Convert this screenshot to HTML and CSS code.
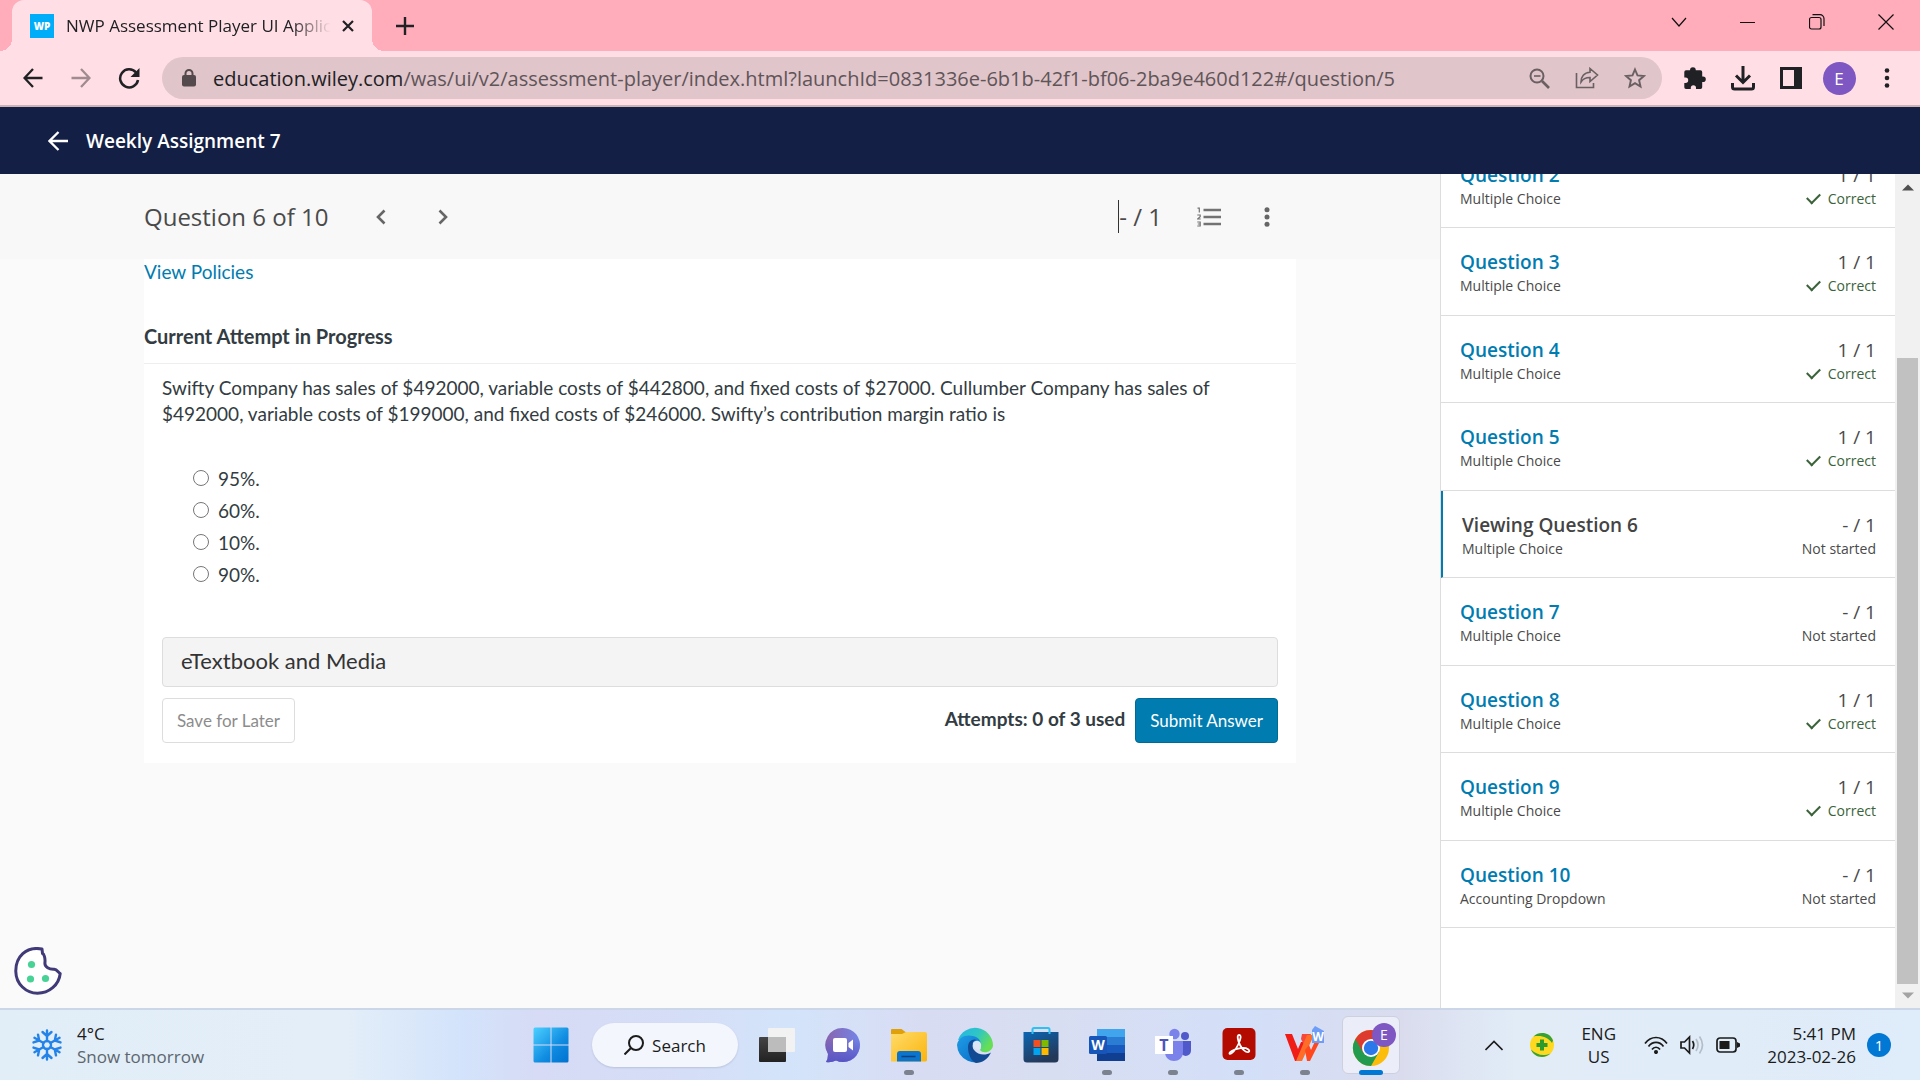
FILE: index.html
```html
<!DOCTYPE html>
<html lang="en">
<head>
  <meta charset="utf-8">
  <title>NWP Assessment Player UI Application</title>
  <link rel="stylesheet" href="styles.css">
</head>
<body>
  <!-- browser chrome -->
  <div class="tabstrip">
    <div class="tab">
      <span class="favicon">WP</span>
      <span class="tab-title">NWP Assessment Player UI Application</span>
      <button class="icon-btn tab-close" aria-label="Close tab"><svg width="14" height="14" viewBox="0 0 14 14"><path d="M2 2l10 10M12 2L2 12" stroke="#202124" stroke-width="2.2"/></svg></button>
    </div>
    <button class="icon-btn new-tab" aria-label="New tab"><svg width="18" height="18" viewBox="0 0 18 18"><path d="M9 0v18M0 9h18" stroke="#202124" stroke-width="2.4"/></svg></button>
    <div class="window-buttons">
      <button class="icon-btn" aria-label="Search tabs"><svg width="16" height="16" viewBox="0 0 16 16"><path d="M1 4l7 8 7-8" fill="none" stroke="#111" stroke-width="1.2"/></svg></button>
      <button class="icon-btn" aria-label="Minimize"><svg width="16" height="16" viewBox="0 0 16 16"><path d="M0 8.5h15" stroke="#111"/></svg></button>
      <button class="icon-btn" aria-label="Restore"><svg width="16" height="16" viewBox="0 0 16 16"><rect x="0.5" y="3.5" width="11.5" height="11.5" rx="2" fill="none" stroke="#111" stroke-width="1.2"/><path d="M3.5 .7H11a4 4 0 0 1 4 4V12" fill="none" stroke="#111" stroke-width="1.2"/></svg></button>
      <button class="icon-btn" aria-label="Close"><svg width="16" height="16" viewBox="0 0 16 16"><path d="M.5.5l15 15M15.500.5l-15 15" stroke="#111" stroke-width="1.2"/></svg></button>
    </div>
  </div>

  <div class="toolbar">
    <button class="icon-btn nav-btn" aria-label="Back"><svg width="20" height="20" viewBox="0 0 20 20"><path d="M19.5 10H2M10 1L1.500 10l8.500 9" fill="none" stroke="#202124" stroke-width="2.3"/></svg></button>
    <button class="icon-btn nav-btn" aria-label="Forward"><svg width="20" height="20" viewBox="0 0 20 20"><path d="M.5 10H18M10 1l8.500 9-8.500 9" fill="none" stroke="#a08b90" stroke-width="2.3"/></svg></button>
    <button class="icon-btn nav-btn" aria-label="Reload"><svg width="22" height="22" viewBox="0 0 22 22"><path d="M18 5.500A9 9 0 1 0 20 13" fill="none" stroke="#202124" stroke-width="2.5"/><path d="M21.500 1v9h-9z" fill="#202124"/></svg></button>
    <div class="omnibox">
      <svg width="14" height="18" viewBox="0 0 14 18"><rect y="6" width="14" height="11.5" rx="2" fill="#54494c"/><path d="M3.500 7V4.500a3.500 3.500 0 0 1 7 0V7" fill="none" stroke="#54494c" stroke-width="2"/></svg>
      <span class="url"><b>education.wiley.com</b>/was/ui/v2/assessment-player/index.html?launchId=0831336e-6b1b-42f1-bf06-2ba9e460d122#/question/5</span>
      <button class="icon-btn tool-btn" aria-label="Zoom"><svg width="21" height="21" viewBox="0 0 21 21" fill="none" stroke="#6a5f62" stroke-width="2"><circle cx="8" cy="8" r="6.5"/><path d="M13 13l7 7" stroke-width="2.6"/><path d="M5 8h6.500" stroke-width="1.6"/></svg></button>
      <button class="icon-btn tool-btn" aria-label="Share"><svg width="24" height="22" viewBox="0 0 24 22" fill="none" stroke="#6a5f62" stroke-width="1.6"><path d="M1.500 6v14.500h17V16"/><path d="M15 1.500L22.500 8 15 14.500v-4c-4 0-7 1.200-9 4.500 0-5 3-9.500 9-9.800z"/></svg></button>
      <button class="icon-btn tool-btn" aria-label="Bookmark"><svg width="22" height="22" viewBox="0 0 22 22"><path d="M11 2.500l2.500 5.900 6.400.6-4.800 4.200 1.400 6.300-5.500-3.300-5.500 3.300 1.400-6.300L2.100 9l6.400-.6z" fill="none" stroke="#6a5f62" stroke-width="1.9"/></svg></button>
    </div>
    <div class="toolbar-actions">
      <button class="icon-btn tool-btn" aria-label="Extensions"><svg width="22" height="22" viewBox="0 0 22 22"><path d="M6 3.200a2.900 2.900 0 0 1 5.800 0h4.700a1.700 1.700 0 0 1 1.700 1.700v4.600h.8a2.800 2.800 0 0 1 0 5.600h-.8v5.200a1.700 1.700 0 0 1-1.700 1.700H12v-1.200a2.600 2.600 0 0 0-5.200 0V22H2a1.700 1.700 0 0 1-1.700-1.700V16h1.200a2.700 2.700 0 0 0 0-5.400H.3V4.900A1.700 1.700 0 0 1 2 3.200z" fill="#202124"/></svg></button>
      <button class="icon-btn tool-btn" aria-label="Downloads"><svg width="24" height="25" viewBox="0 0 24 25" fill="none" stroke="#202124" stroke-width="3"><path d="M12 0v16M5 9.500l7 7 7-7"/><path d="M1.500 17v4q0 2 2 2h17q2 0 2-2v-4"/></svg></button>
      <button class="icon-btn tool-btn" aria-label="Side panel"><svg width="22" height="22" viewBox="0 0 22 22"><path d="M0 0h22v22H0zM3 3v16h11V3z" fill="#202124" fill-rule="evenodd"/></svg></button>
      <button class="icon-btn tool-btn" aria-label="Profile"><span class="avatar">E</span></button>
      <button class="icon-btn tool-btn" aria-label="Menu"><svg width="6" height="20" viewBox="0 0 6 20" fill="#202124"><circle cx="3" cy="2.5" r="2.3"/><circle cx="3" cy="10" r="2.3"/><circle cx="3" cy="17.5" r="2.3"/></svg></button>
    </div>
  </div>

  <header class="app-header">
    <button class="icon-btn" aria-label="Back to course"><svg width="20" height="20" viewBox="0 0 20 20"><path d="M20 10H2M10.500 1L1.500 10l9 9" fill="none" stroke="#fff" stroke-width="2.3"/></svg></button>
    <h1>Weekly Assignment 7</h1>
  </header>

  <div class="content">
    <main class="player">
      <div class="question-bar">
        <h2>Question 6 of 10</h2>
        <button class="icon-btn step" aria-label="Previous question"><svg width="10" height="16" viewBox="0 0 10 16"><path d="M8.500 1.500L2 8l6.500 6.500" fill="none" stroke="#666" stroke-width="2.6"/></svg></button>
        <button class="icon-btn step" aria-label="Next question"><svg width="10" height="16" viewBox="0 0 10 16"><path d="M1.500 1.500L8 8l-6.500 6.500" fill="none" stroke="#666" stroke-width="2.6"/></svg></button>
        <span class="bar-score">- / 1</span>
        <button class="icon-btn bar-list" aria-label="Question list"><svg width="24" height="20" viewBox="0 0 24 20" fill="none" stroke="#737373"><path d="M6.500 3H24M6.500 10H24M6.500 17H24" stroke-width="2.4"/><path d="M.5 1.200H2.300V5.500M.3 8H3.200V9.700L.6 12H3.700M.3 15H3.200V19H.3M.8 17H3.200" stroke-width="1.2"/></svg></button>
        <button class="icon-btn bar-more" aria-label="More"><svg width="6" height="20" viewBox="0 0 6 20" fill="#666"><circle cx="3" cy="2.8" r="2.5"/><circle cx="3" cy="10" r="2.5"/><circle cx="3" cy="17.2" r="2.5"/></svg></button>
      </div>

      <section class="card">
        <a class="policies" href="#">View Policies</a>
        <h3>Current Attempt in Progress</h3>
        <div class="question">
          <p>Swifty Company has sales of $492000, variable costs of $442800, and fixed costs of $27000. Cullumber Company has sales of $492000, variable costs of $199000, and fixed costs of $246000. Swifty’s contribution margin ratio is</p>
          <div class="answers">
            <label><input type="radio" name="answer" value="95">95%.</label>
            <label><input type="radio" name="answer" value="60">60%.</label>
            <label><input type="radio" name="answer" value="10">10%.</label>
            <label><input type="radio" name="answer" value="90">90%.</label>
          </div>
          <button class="etextbook">eTextbook and Media</button>
          <div class="actions">
            <button class="btn save">Save for Later</button>
            <span class="attempts">Attempts: 0 of 3 used</span>
            <button class="btn submit">Submit Answer</button>
          </div>
        </div>
      </section>

      <button class="icon-btn cookie" aria-label="Cookie settings"><svg width="48" height="48" viewBox="0 0 48 48"><path d="M28 2C12-1 1.500 10 1.800 24.500 2 37 12 46.200 23.500 46.200S45 38 46.200 26.500c-2-1-3-4-6-4.300-5 .3-9.500-2-9.300-6.200C31.500 11 30 7 28.500 6.500z" fill="#fff" stroke="#403a78" stroke-width="3" stroke-linejoin="round"/><g fill="#49d295"><circle cx="17.5" cy="17.5" r="3.6"/><circle cx="16.5" cy="32" r="3.6"/><circle cx="31.5" cy="31.5" r="3.6"/></g></svg></button>
    </main>

    <aside class="sidebar">
      <ul class="question-list">
        <li><div><a href="#">Question 2</a><small>Multiple Choice</small></div><div class="result"><span>1 / 1</span><small class="correct">Correct</small></div></li>
        <li><div><a href="#">Question 3</a><small>Multiple Choice</small></div><div class="result"><span>1 / 1</span><small class="correct">Correct</small></div></li>
        <li><div><a href="#">Question 4</a><small>Multiple Choice</small></div><div class="result"><span>1 / 1</span><small class="correct">Correct</small></div></li>
        <li><div><a href="#">Question 5</a><small>Multiple Choice</small></div><div class="result"><span>1 / 1</span><small class="correct">Correct</small></div></li>
        <li class="current"><div><a href="#">Viewing Question 6</a><small>Multiple Choice</small></div><div class="result"><span>- / 1</span><small>Not started</small></div></li>
        <li><div><a href="#">Question 7</a><small>Multiple Choice</small></div><div class="result"><span>- / 1</span><small>Not started</small></div></li>
        <li><div><a href="#">Question 8</a><small>Multiple Choice</small></div><div class="result"><span>1 / 1</span><small class="correct">Correct</small></div></li>
        <li><div><a href="#">Question 9</a><small>Multiple Choice</small></div><div class="result"><span>1 / 1</span><small class="correct">Correct</small></div></li>
        <li><div><a href="#">Question 10</a><small>Accounting Dropdown</small></div><div class="result"><span>- / 1</span><small>Not started</small></div></li>
      </ul>
      <div class="scrollbar">
        <svg width="12" height="7" viewBox="0 0 12 7"><path d="M0 6.500L6 .5l6 6z" fill="#505050"/></svg>
        <div class="thumb"></div>
        <svg width="12" height="7" viewBox="0 0 12 7"><path d="M0 .5l6 6 6-6z" fill="#a3a3a3"/></svg>
      </div>
    </aside>
  </div>

  <footer class="taskbar">
    <div class="weather">
      <svg width="32" height="32" viewBox="0 0 32 32" fill="none" stroke="#2383e8" stroke-width="2.4" stroke-linecap="round">
        <circle cx="16" cy="16" r="4"/>
        <g id="arm"><path d="M16 12V1.500M16 7l-4.500-4M16 7l4.500-4"/></g>
        <use href="#arm" transform="rotate(60 16 16)"/><use href="#arm" transform="rotate(120 16 16)"/><use href="#arm" transform="rotate(180 16 16)"/><use href="#arm" transform="rotate(240 16 16)"/><use href="#arm" transform="rotate(300 16 16)"/>
      </svg>
      <div><span>4°C</span><span class="muted">Snow tomorrow</span></div>
    </div>

    <div class="apps">
      <button class="app" aria-label="Start"><svg width="36" height="36" viewBox="0 0 36 36"><defs><linearGradient id="win" x1="0" y1="0" x2="1" y2="1"><stop offset="0" stop-color="#4cd0ff"/><stop offset=".6" stop-color="#0f8be0"/><stop offset="1" stop-color="#0072d0"/></linearGradient></defs><path d="M2 .5h15.500v17H.5V2Q.5.500 2 .5zM18.500.5H34q1.500 0 1.500 1.500v15.500h-17zM.5 18.500h17v17H2q-1.500 0-1.500-1.500zM18.500 18.500h17V34q0 1.500-1.500 1.500H18.500z" fill="url(#win)"/></svg></button>
      <button class="search"><svg width="20" height="20" viewBox="0 0 20 20" fill="none" stroke="#1b1b1b" stroke-width="2"><circle cx="12" cy="8" r="7"/><path d="M7 13l-6.500 6.500"/></svg>Search</button>
      <button class="app" aria-label="Task view"><svg width="36" height="36" viewBox="0 0 36 36"><defs><linearGradient id="tv" x1="0" y1="0" x2="0" y2="1"><stop offset="0" stop-color="#444"/><stop offset="1" stop-color="#222"/></linearGradient></defs><rect y="10" width="27" height="25" rx="1" fill="url(#tv)"/><rect x="9" y="1" width="27" height="24" rx="1" fill="#f2f2f2"/><rect x="9" y="10" width="18" height="15" fill="#bcbcbc"/></svg></button>
      <button class="app" aria-label="Chat"><svg width="36" height="36" viewBox="0 0 36 36"><defs><linearGradient id="chat" x1="0" y1="0" x2="1" y2="0"><stop offset="0" stop-color="#8a64ad"/><stop offset="1" stop-color="#7385e8"/></linearGradient><linearGradient id="chat2" x1="0" y1="0" x2="0" y2="1"><stop offset=".3" stop-color="#5558c8" stop-opacity="0"/><stop offset="1" stop-color="#5755c6"/></linearGradient></defs><path d="M18 1a17 17 0 1 1-7 32.500Q6 36 1 35q2-3 2-8A17 17 0 0 1 18 1z" fill="url(#chat)"/><path d="M18 1a17 17 0 1 1-7 32.500Q6 36 1 35q2-3 2-8A17 17 0 0 1 18 1z" fill="url(#chat2)"/><rect x="8" y="11" width="14" height="14" rx="2" fill="#fff"/><path d="M23.500 16l4.500-3.500v11L23.500 20z" fill="#fff"/></svg></button>
      <button class="app open" aria-label="File Explorer"><svg width="36" height="36" viewBox="0 0 36 36"><defs><linearGradient id="fold" x1="0" y1="0" x2="1" y2="1"><stop offset="0" stop-color="#ffdc6b"/><stop offset="1" stop-color="#fbb40c"/></linearGradient></defs><path d="M0 3q0-1 1-1h9.500l4 3H34v4H0z" fill="#dfa009"/><path d="M0 7h11l4-2h19q2 0 2 2v26q0 1.500-2 1.500H0z" fill="url(#fold)"/><path d="M6 34.500V27q0-3 3-3h18q3 0 3 3v7.500z" fill="#0b74cc"/><path d="M10.500 29.500h14" stroke="#073e7c" stroke-width="1.5"/></svg></button>
      <button class="app" aria-label="Edge"><svg width="36" height="36" viewBox="0 0 36 36"><defs><linearGradient id="e1" x1="0" y1="0" x2="1" y2=".5"><stop offset="0" stop-color="#24b5e8"/><stop offset=".55" stop-color="#2fc6c4"/><stop offset="1" stop-color="#67df54"/></linearGradient><linearGradient id="e2" x1="0" y1="0" x2="1" y2="1"><stop offset="0" stop-color="#1f9de6"/><stop offset="1" stop-color="#0867c4"/></linearGradient></defs><path d="M1 13A18 18 0 0 1 36 18c0 7-10 9.500-13 5 2-3 1-8-4-10-6-2.500-14-1-18 0z" fill="url(#e1)"/><path d="M0 18C1 10 9 7 16 9c6 1.500 8 5 7.500 8-2-3-8-3-8 3 0 8 8 14 14 11A18 18 0 0 1 0 18z" fill="url(#e2)"/><path d="M11 20c0-6 5-9 9-7-5 0-6 6-3 10 4 5 11 6 17 2.500C31 32 25 36 19 36c-5-2-8-9-8-16z" fill="#114a92"/><path d="M16 16c2-3 7-3 8 1 .6 2.500-1 4-.5 5-3 2-8-1-7.500-6z" fill="#dce5f5"/></svg></button>
      <button class="app" aria-label="Microsoft Store"><svg width="36" height="36" viewBox="0 0 36 36"><defs><linearGradient id="st" x1="0" y1="0" x2=".5" y2="1"><stop offset="0" stop-color="#0b66b4"/><stop offset="1" stop-color="#243858"/></linearGradient></defs><path d="M.5 5h35v27q0 3.500-3.500 3.500H4Q.5 35.500.5 32z" fill="url(#st)"/><path d="M9.500 7V2.500q0-1.500 1.500-1.500h14q1.500 0 1.500 1.500V7" fill="none" stroke="#2fc0f2" stroke-width="2"/><path fill="#f25022" d="M10.500 13h7v7h-7z"/><path fill="#7fba00" d="M18.500 13h7v7h-7z"/><path fill="#00a4ef" d="M10.500 21h7v7h-7z"/><path fill="#ffb900" d="M18.500 21h7v7h-7z"/></svg></button>
      <button class="app open" aria-label="Word"><svg width="36" height="36" viewBox="0 0 36 36"><path fill="#41a5ee" d="M8 2h28v8H8z"/><path fill="#2b7cd3" d="M8 10h28v8H8z"/><path fill="#185abd" d="M8 18h28v8H8z"/><path fill="#103f91" d="M8 26h28v8H8z"/><rect y="9" width="18" height="18" rx="1.5" fill="#1755b8"/><text x="9" y="23" text-anchor="middle" class="glyph word">W</text></svg></button>
      <button class="app open" aria-label="Teams"><svg width="36" height="36" viewBox="0 0 36 36"><circle cx="30" cy="9" r="4" fill="#5059c9"/><path d="M26 14h10v9c0 8-10 7-10 2z" fill="#5059c9"/><circle cx="19.5" cy="7" r="5.2" fill="#7b83eb"/><path d="M10 14h18v11c0 12-18 12-18 0z" fill="#7b83eb"/><path fill="#fff" d="M0 9h18v18H0z"/><text x="9" y="24" text-anchor="middle" class="glyph teams">T</text></svg></button>
      <button class="app open" aria-label="Acrobat"><svg width="36" height="36" viewBox="0 0 36 36"><rect x="1.5" y="1" width="33" height="32" rx="5" fill="#b30b00"/><path d="M18 8c-2.500 0-1 6 1 10s6 8 8.500 7-1-5-8-3.800S8 25 8.500 26.500C10 28 15 22.500 17.500 17S20.500 8 18 8z" fill="none" stroke="#fff" stroke-width="1.8"/></svg></button>
      <button class="app open" aria-label="WPS Office"><svg width="40" height="40" viewBox="0 0 40 40"><path d="M0 9h7l6 15 3-7h6l-8 19h-4z" fill="#f01c16"/><path d="M17 9h9L20 22l-4-8z" fill="#f8473a"/><path d="M22 10h7L17 36h-6z" fill="#ff6d28"/><path d="M20 25l4-5 2 5 6-13h5L25 36h-3z" fill="#ff481d"/><path d="M27 5l3-4 9 5v12H27z" fill="#6e9df7"/><text x="33" y="16" text-anchor="middle" class="glyph wps">W</text></svg></button>
      <button class="app open active" aria-label="Chrome"><svg width="48" height="46" viewBox="0 0 48 46"><circle cx="20" cy="26" r="18" fill="#fbbd0a"/><path d="M20 26L4.400 17A18 18 0 0 0 20 44l8-14z" fill="#229b4e"/><path d="M20 17h15.600A18 18 0 0 0 4.400 17l8 14z" fill="#dd3b2e"/><circle cx="20" cy="26" r="9" fill="#fff"/><circle cx="20" cy="26" r="7.2" fill="#2b78ea"/><circle cx="33" cy="13" r="12" fill="#7e57c2"/><text x="33" y="18" text-anchor="middle" class="glyph profile">E</text></svg></button>
    </div>

    <div class="tray">
      <button class="icon-btn" aria-label="Hidden icons"><svg width="18" height="11" viewBox="0 0 18 11"><path d="M.5 10L9 1.500l8.500 8.500" fill="none" stroke="#1b1b1b" stroke-width="1.6"/></svg></button>
      <svg class="shield" width="24" height="24" viewBox="0 0 24 24"><circle cx="12" cy="12" r="12" fill="#ffd91f"/><path d="M3.500 3.500C9-2 20-1 23 7.500L22 10C18 4 11 2 3.500 3.500zM20.500 20.500C15 26 4 25 1 16.500c6 5.500 12 7 19.500 4z" fill="#36a136"/><path d="M12 6.500v11M6.500 12h11" stroke="#2b9b2e" stroke-width="4"/></svg>
      <div class="lang"><span>ENG</span><span>US</span></div>
      <div class="status">
        <svg width="24" height="18" viewBox="0 0 24 18" fill="none" stroke="#1b1b1b" stroke-width="1.7"><path d="M1 7.500c6-8 16-8 22 0M4.500 10.500c4-5.500 11-5.500 15 0M8 13.500c2-3 6-3 8 0"/><circle cx="12" cy="16" r="1.2" fill="#1b1b1b"/></svg>
        <svg width="24" height="20" viewBox="0 0 24 20" fill="none" stroke-width="1.7"><path d="M1 7h3.500L9.500 2v16l-5-5H1z" stroke="#1b1b1b"/><path d="M12.500 6q2.500 4 0 8" stroke="#1b1b1b"/><path d="M16 4q4 6 0 12M19.500 1.500q6 8.500 0 17" stroke="#b4bec8"/></svg>
        <svg width="24" height="16" viewBox="0 0 24 16"><rect x="1" y="1" width="19" height="14" rx="3" fill="none" stroke="#1b1b1b" stroke-width="1.7"/><path d="M3.500 4h10v8h-10zM21 5l3 1.500v3L21 11z" fill="#1b1b1b"/></svg>
      </div>
      <div class="clock"><span>5:41 PM</span><span>2023-02-26</span></div>
      <span class="badge">1</span>
    </div>
  </footer>
</body>
</html>
```

FILE: styles.css
```css
* {
  box-sizing: border-box;
}

body {
  margin: 0;
  height: 100vh;
  display: flex;
  flex-direction: column;
  overflow: hidden;
  font-family: "Open Sans", "Noto Sans", sans-serif;
  color: #4a4a4a;
}

button {
  font-family: inherit;
  cursor: pointer;
}

.icon-btn {
  display: flex;
  align-items: center;
  justify-content: center;
  padding: 0;
  border: none;
  background: none;
}

svg {
  display: block;
  flex: none;
}

/* browser chrome */

.tabstrip {
  display: flex;
  height: 51px;
  padding-left: 12px;
  background-color: #ffacbb;
}

.tab {
  position: relative;
  display: flex;
  align-items: center;
  width: 360px;
  padding: 0 17px 0 18px;
  border-radius: 12px 12px 0 0;
  background-color: #ffdfe5;
}

.tab::before,
.tab::after {
  content: "";
  position: absolute;
  bottom: 0;
  width: 12px;
  height: 12px;
}

.tab::before {
  left: -12px;
  background: radial-gradient(circle at 0 0, transparent 12px, #ffdfe5 12px);
}

.tab::after {
  right: -12px;
  background: radial-gradient(circle at 100% 0, transparent 12px, #ffdfe5 12px);
}

.favicon {
  width: 24px;
  line-height: 24px;
  background-color: #00adf8;
  color: #fff;
  font-size: 10px;
  font-weight: 800;
  text-align: center;
}

.tab-title {
  flex: 1;
  margin-left: 12px;
  margin-right: 10px;
  overflow: hidden;
  white-space: nowrap;
  font-size: 17px;
  color: #202124;
  -webkit-mask-image: linear-gradient(to right, #000 85%, transparent);
  mask-image: linear-gradient(to right, #000 85%, transparent);
}

.new-tab {
  width: 66px;
}

.window-buttons {
  display: flex;
  margin-left: auto;
  height: 43px;
}

.window-buttons button {
  width: 69px;
}

.toolbar {
  display: flex;
  align-items: center;
  height: 56px;
  padding-left: 9px;
  background-color: #ffdfe5;
  border-bottom: 2px solid #ccb3b8;
}

.nav-btn {
  width: 48px;
  height: 42px;
}

.tool-btn {
  width: 48px;
  height: 42px;
}

.omnibox {
  display: flex;
  align-items: center;
  flex: 1;
  height: 42px;
  margin-left: 9px;
  padding: 0 3px 0 20px;
  border-radius: 21px;
  background-color: #e0c5ca;
}

.url {
  flex: 1;
  margin-left: 17px;
  overflow: hidden;
  white-space: nowrap;
  font-size: 20px;
  color: #5f5458;
}

.url b {
  font-weight: 400;
  color: #202124;
}

.toolbar-actions {
  display: flex;
  align-items: center;
  padding: 0 9px;
}

.avatar {
  width: 33px;
  border-radius: 50%;
  background-color: #7e57c2;
  color: #fff;
  font-size: 17px;
  line-height: 33px;
  text-align: center;
}

/* assignment header */

.app-header {
  display: flex;
  align-items: center;
  gap: 18px;
  height: 67px;
  padding-left: 48px;
  background-color: #141f45;
}

.app-header h1 {
  margin: 0;
  font-size: 19px;
  font-weight: 600;
  color: #fff;
}

.content {
  flex: 1;
  min-height: 0;
  display: grid;
  grid-template-columns: 3fr 1fr;
}

/* question */

.player {
  display: flex;
  flex-direction: column;
  background-color: #fafafa;
}

.question-bar {
  display: flex;
  align-items: center;
  height: 85px;
  padding: 0 10%;
  background-color: #f8f8f8;
}

.question-bar h2 {
  margin: 0 22px 0 0;
  font-size: 24px;
  font-weight: 400;
}

.step {
  width: 62px;
  height: 40px;
}

.bar-score {
  margin-left: auto;
  border-left: 1px solid #333;
  font-size: 24px;
}

.bar-list {
  margin-left: 35px;
}

.bar-more {
  margin: 0 26px 0 43px;
}

.card {
  margin: 0 10%;
  background-color: #fff;
  font-family: Lato, sans-serif;
  font-size: 19px;
  color: #333c42;
}

.policies {
  display: block;
  line-height: 26px;
  color: #007cb0;
  text-decoration: none;
}

.card h3 {
  margin: 38px 0 0;
  padding-bottom: 14px;
  border-bottom: 1px solid #eee;
  font-size: 20px;
  font-weight: 700;
  line-height: 26px;
}

.question {
  padding: 11px 18px 20px;
}

.question p {
  margin: 0 0 35px;
  line-height: 26px;
}

.answers {
  padding-left: 31px;
}

.answers label {
  display: flex;
  align-items: center;
  height: 32px;
}

.answers input {
  width: 16px;
  height: 16px;
  margin: 0 9px 0 0;
}

.etextbook {
  display: block;
  width: 100%;
  margin: 47px 0 11px;
  padding: 7px 18px 9px;
  border: 1px solid #ddd;
  border-radius: 4px;
  background-color: #f4f4f4;
  color: #333;
  font-size: 22px;
  line-height: 32px;
  text-align: left;
}

.actions {
  display: flex;
  align-items: center;
}

.btn {
  padding: 9px 14px;
  border: 1px solid #ddd;
  border-radius: 4px;
  background-color: #fff;
  font-size: 17px;
  line-height: 25px;
  color: #8c8c8c;
}

.attempts {
  margin: 0 10px 4px auto;
  font-weight: 700;
}

.submit {
  background-color: #007cb0;
  border-color: #006a97;
  color: #fff;
}

.cookie {
  align-self: flex-start;
  margin: auto 0 13px 14px;
}

/* question list */

.sidebar {
  display: flex;
  min-height: 0;
  overflow: hidden;
  border-left: 1px solid #ddd;
  background-color: #fff;
}

.question-list {
  flex: 1;
  display: grid;
  grid-auto-rows: 1fr;
  margin: -33px 0 80px;
  padding: 0;
  list-style: none;
}

.question-list li {
  display: flex;
  justify-content: space-between;
  padding: 21px 19px 0;
  border-bottom: 1px solid #ddd;
}

.question-list .current {
  border-left: 2px solid #007cb0;
}

.question-list a,
.result span {
  display: block;
  font-size: 19px;
  line-height: 26px;
}

.question-list a {
  color: #007cb0;
  font-weight: 600;
  text-decoration: none;
}

.question-list .current a {
  color: #444;
}

.question-list small {
  display: block;
  font-size: 14px;
  line-height: 22px;
}

.result {
  text-align: right;
}

.question-list .correct {
  color: #3a6339;
}

.correct::before {
  content: "";
  display: inline-block;
  width: 11px;
  height: 6px;
  margin-right: 8px;
  border-left: 2px solid #3a6339;
  border-bottom: 2px solid #3a6339;
  transform: translateY(-3px) rotate(-45deg);
}

.scrollbar {
  display: flex;
  flex-direction: column;
  align-items: center;
  width: 25px;
  padding: 10px 0 9px;
  background-color: #f1f1f1;
}

.thumb {
  width: 21px;
  flex: 1;
  margin: 167px 0 8px;
  background-color: #c1c1c1;
}

/* taskbar */

.taskbar {
  display: grid;
  grid-template-columns: 1fr auto 1fr;
  align-items: center;
  height: 72px;
  border-top: 2px solid #cbd7e9;
  background: linear-gradient(to right, #e1edf7 0%, #e3eef8 18%, #d3e3fb 24%, #d7dbf5 28%, #d5def7 36%, #d3e4fa 41%, #d8dcf3 48%, #d8def2 55%, #d3dff8 65%, #dadcee 73%, #e1ecf7 79%, #dfecf9 100%);
  font-size: 17px;
  color: #1b1b1b;
}

.taskbar span {
  display: block;
  line-height: 23px;
}

.weather {
  display: flex;
  align-items: center;
  gap: 14px;
  padding-left: 31px;
}

.weather .muted {
  color: #5d666e;
}

.apps {
  display: flex;
  align-items: center;
  padding-left: 2px;
}

.app {
  position: relative;
  display: flex;
  align-items: center;
  justify-content: center;
  width: 66px;
  height: 66px;
  padding: 0;
  border: none;
  background: none;
}

.open::after {
  content: "";
  position: absolute;
  bottom: 3px;
  left: 28px;
  width: 10px;
  height: 5px;
  border-radius: 3px;
  background-color: #7c828e;
}

.active {
  width: 58px;
  height: 58px;
  margin: 0 4px;
  padding-left: 7px;
  border: 1px solid #ccd0df;
  border-radius: 6px;
  background-color: #ebeef8;
}

.active::after {
  bottom: -2px;
  left: 16px;
  width: 24px;
  background-color: #0078d4;
}

.search {
  display: flex;
  align-items: center;
  justify-content: center;
  gap: 8px;
  width: 146px;
  height: 44px;
  margin: 0 6px 0 8px;
  padding: 0;
  border: none;
  border-radius: 22px;
  background-color: #f3f6fd;
  box-shadow: 0 1px 2px #b9c2dc;
  font-size: 17px;
  color: #1b1b1b;
}

.glyph {
  fill: #fff;
  font-family: "Open Sans", sans-serif;
  font-weight: 700;
  font-size: 14px;
}

.teams {
  fill: #4b53bc;
  font-size: 16px;
}

.wps {
  font-size: 12px;
}

.profile {
  font-weight: 400;
}

.tray {
  display: flex;
  align-items: center;
  justify-content: flex-end;
  padding-right: 29px;
}

.shield {
  margin: 0 27px;
}

.lang {
  text-align: center;
}

.status {
  display: flex;
  align-items: center;
  gap: 12px;
  margin: 0 22px 0 28px;
}

.clock {
  min-width: 94px;
  text-align: right;
}

.taskbar .badge {
  width: 24px;
  margin-left: 11px;
  border-radius: 50%;
  background-color: #0078d4;
  color: #fff;
  font-size: 15px;
  line-height: 24px;
  text-align: center;
}
```
